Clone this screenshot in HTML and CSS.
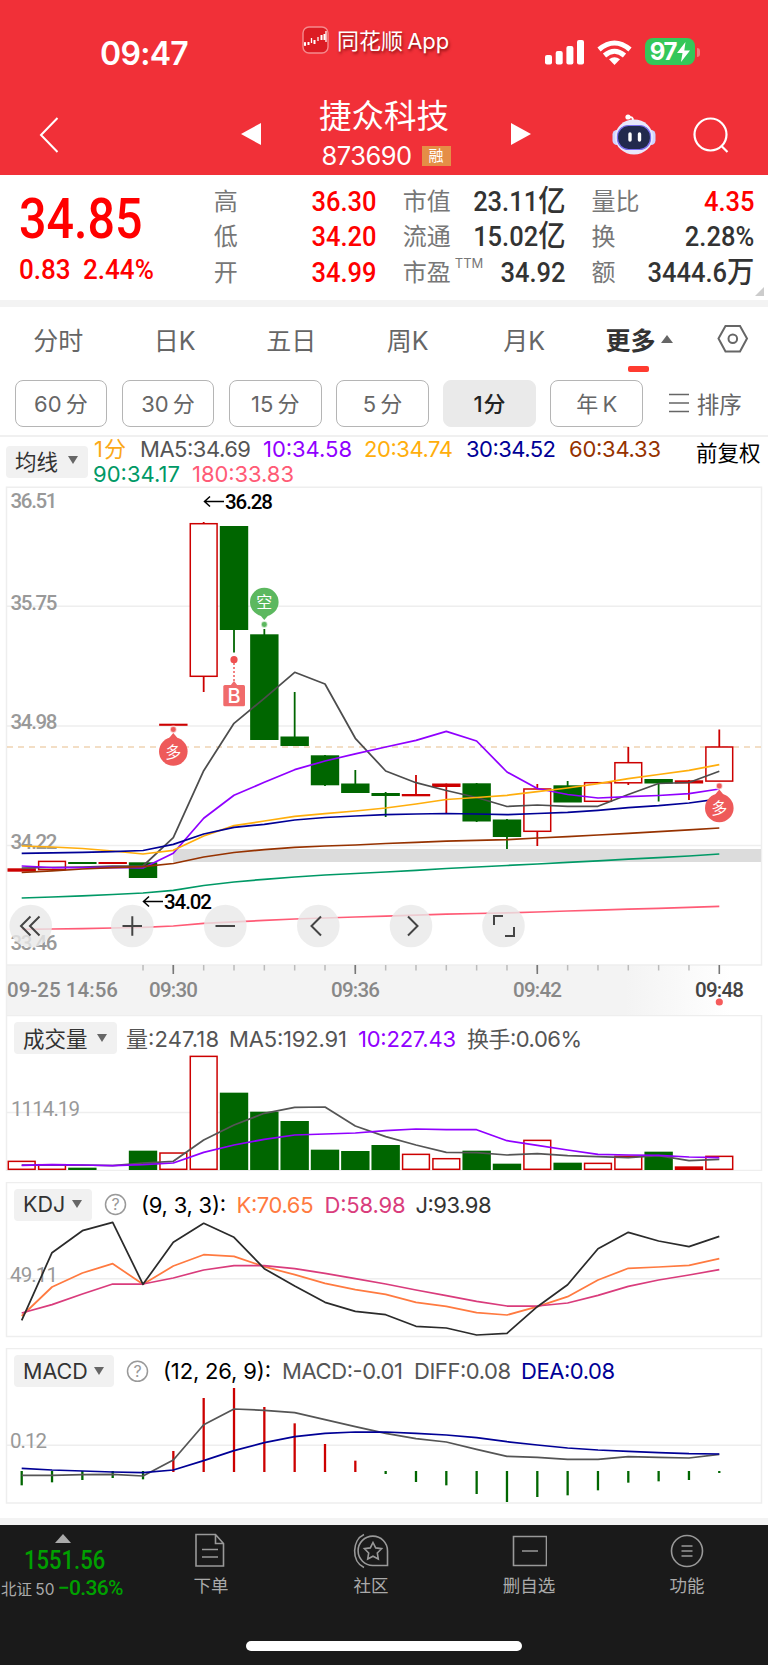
FILE: index.html
```html
<!DOCTYPE html>
<html lang="zh-CN">

<head>
    <meta charset="UTF-8">
    <meta name="viewport" content="width=device-width, initial-scale=1.0">
    <title>捷众科技 873690</title>
    <link rel="stylesheet" href="styles.css">
</head>

<body>
    <header>
        <div class="status-bar">
            <div class="clock">09:47</div>
            <div class="app-name">
                <svg width="27" height="28" viewBox="0 0 27 28">
                    <rect x="1" y="1" width="25" height="26" rx="6" fill="#dc1c24" stroke="#f58a8d" stroke-width="1.4" />
                    <path d="M3 16v4M9.500 12v5M16 11v4M24 5v11" stroke="#fff" stroke-width="1.300" />
                    <path d="M3 16.500v3M6.500 16v3M12.500 14v4M19.500 9v5M22.500 8v6" stroke="#fff" stroke-width="2" />
                </svg>
                <span>同花顺 App</span>
            </div>
            <div class="status-icons">
                <svg width="39" height="25" viewBox="0 0 39 25" fill="#fff">
                    <rect x="0" y="15" width="7" height="9.500" rx="2" />
                    <rect x="10.700" y="11" width="7" height="13.500" rx="2" />
                    <rect x="21.400" y="6" width="7" height="18.500" rx="2" />
                    <rect x="32" y="0" width="7" height="24.500" rx="2" />
                </svg>
                <svg class="wifi" width="35" height="26" viewBox="0 0 35 26" fill="none" stroke="#fff" stroke-width="5">
                    <path d="M2 9.500Q17.500-3.500 33 9.500" />
                    <path d="M7.500 15.500Q17.500 7 27.500 15.500" />
                    <path d="M17.500 25L12 19.200Q17.500 15.500 23 19.200Z" fill="#fff" stroke="none" />
                </svg>
                <div class="battery">97<svg width="13" height="20" viewBox="0 0 13 20"><path d="M8.500 0L0 11h5.500L4 20l9-11.500H7.300z" fill="#fff" /></svg></div>
                <i class="battery-tip"></i>
            </div>
        </div>
        <div class="nav">
            <svg class="back" width="20" height="36" viewBox="0 0 20 36"><path d="M18.500 1L2 18l16.500 17" fill="none" stroke="#fff" stroke-width="2" /></svg>
            <svg class="prev" width="20" height="22" viewBox="0 0 20 22"><path d="M0 11L20 0v22z" fill="#fff" /></svg>
            <div class="stock">
                <div class="stock-name">捷众科技</div>
                <div class="stock-code">873690 <span class="tag">融</span></div>
            </div>
            <svg class="next" width="20" height="22" viewBox="0 0 20 22"><path d="M20 11L0 0v22z" fill="#fff" /></svg>
            <svg class="robot" width="44" height="41" viewBox="0 0 44 41">
                <path d="M21 7c0-4-1-4-5-4" fill="none" stroke="#fff" stroke-width="2" />
                <circle cx="16" cy="3" r="2.600" fill="#fff" />
                <rect x="0.500" y="16" width="9" height="15" rx="4.500" fill="#cfd4ff" />
                <rect x="34.500" y="16" width="9" height="15" rx="4.500" fill="#cfd4ff" />
                <ellipse cx="22" cy="23" rx="19" ry="17.500" fill="#e9e8fb" />
                <rect x="5.500" y="11.500" width="33" height="24" rx="11" fill="#222a4d" stroke="#7b6ff0" stroke-width="1.200" />
                <path d="M18 20v6M27.500 20v6" stroke="#fff" stroke-width="3.400" stroke-linecap="round" />
            </svg>
            <svg class="search" width="36" height="36" viewBox="0 0 36 36" fill="none" stroke="#fff" stroke-width="2.200">
                <circle cx="17.500" cy="17.500" r="16" />
                <path d="M28.500 29l6 6" />
            </svg>
        </div>
    </header>

    <section class="quote">
        <div class="price-box">
            <div class="price"><span>34.85</span></div>
            <div class="change"><span>0.83</span><span>2.44%</span></div>
        </div>
        <dl>
            <div><dt>高</dt><dd class="red">36.30</dd></div>
            <div><dt>低</dt><dd class="red">34.20</dd></div>
            <div><dt>开</dt><dd class="red">34.99</dd></div>
        </dl>
        <dl>
            <div><dt>市值</dt><dd>23.11<b>亿</b></dd></div>
            <div><dt>流通</dt><dd>15.02<b>亿</b></dd></div>
            <div><dt>市盈<sup>TTM</sup></dt><dd>34.92</dd></div>
        </dl>
        <dl>
            <div><dt>量比</dt><dd class="red">4.35</dd></div>
            <div><dt>换</dt><dd>2.28%</dd></div>
            <div><dt>额</dt><dd>3444.6<b>万</b></dd></div>
        </dl>
        <i class="corner"></i>
    </section>

    <nav class="tabs">
        <span>分时</span>
        <span>日K</span>
        <span>五日</span>
        <span>周K</span>
        <span>月K</span>
        <span class="active">更多<i class="tri-up"></i></span>
        <svg width="32" height="30" viewBox="0 0 32 30" fill="none" stroke="#666" stroke-width="2">
            <path d="M8.500 2h14.500l7 12.500L23 27.500H8.500L1.500 14.500z" />
            <circle cx="15.800" cy="14.700" r="4.300" />
        </svg>
    </nav>
    <div class="periods">
        <button>60 分</button>
        <button>30 分</button>
        <button>15 分</button>
        <button>5 分</button>
        <button class="selected">1 分</button>
        <button>年 K</button>
        <div class="sort"><svg width="20" height="20" viewBox="0 0 20 20" stroke="#666" stroke-width="1.700"><path d="M0 1.500h20M0 10h20M0 18.500h20" /></svg>排序</div>
    </div>

    <div class="ma-bar">
        <div class="picker">均线<i class="tri-down"></i></div>
        <svg class="legend" width="608" height="49" viewBox="88 437 608 49">
            <text x="94" y="457" textLength="32" fill="#fba919">1分</text>
            <text x="140" y="457" textLength="111" fill="#555">MA5:34.69</text>
            <text x="263" y="457" textLength="89" fill="#9000ff">10:34.58</text>
            <text x="364" y="457" textLength="89" fill="#ffae0c">20:34.74</text>
            <text x="466" y="457" textLength="90" fill="#000096">30:34.52</text>
            <text x="569" y="457" textLength="92" fill="#963200">60:34.33</text>
            <text x="93" y="481.500" textLength="87" fill="#009966">90:34.17</text>
            <text x="192" y="481.500" textLength="102" fill="#ff5b76">180:33.83</text>
        </svg>
        <div class="adjust">前复权</div>
    </div>

    <svg id="kline" class="chart" width="768" height="530" viewBox="0 486 768 530">
        <defs>
            <linearGradient id="fade" x1="0" x2="1" y1="0" y2="0">
                <stop offset="0.820" stop-color="#f3f3f3" />
                <stop offset="0.960" stop-color="#fff" />
            </linearGradient>
        </defs>
        <rect x="6" y="965" width="755" height="50" fill="url(#fade)" />
        <path class="grid" d="M6.500 1015V487.200H761.500V965H6.500M6.500 606.200H761M6.500 726H761M6.500 845.500H761" />
        <rect x="173" y="849" width="588" height="13" fill="#dcdcdc" />
        <g class="axis">
            <text x="10.500" y="507.500" textLength="47">36.51</text>
            <text x="10.500" y="609.500" textLength="47">35.75</text>
            <text x="10.500" y="729" textLength="47">34.98</text>
            <text x="10.500" y="848.500" textLength="47">34.22</text>
            <text x="10.500" y="950" textLength="47">33.46</text>
        </g>
        <path d="M7 747H761" stroke="#e8bd8c" stroke-width="1.200" stroke-dasharray="6 5" />
        <g class="candles"></g>
        <g class="lines"></g>

        <g class="mark">
            <path d="M224 501.500H204.500M210 496.500l-5.500 5 5.500 5" />
            <text x="225" y="509" textLength="48">36.28</text>
            <path d="M163 901.500H143.500M149 896.500l-5.500 5 5.500 5" />
            <text x="164" y="909" textLength="48">34.02</text>
        </g>

        <g class="pin" fill="#ee5a5a">
            <circle class="halo" cx="173.300" cy="729.500" r="3.200" />
            <path d="M173.300 733l5 6h-10z" />
            <circle cx="173.300" cy="751.500" r="14.300" />
            <text x="173.300" y="757.500">多</text>
        </g>
        <g class="pin" fill="#ee5a5a">
            <circle class="halo" cx="719.300" cy="786" r="3.200" />
            <path d="M719.300 789.500l5 6h-10z" />
            <circle cx="719.300" cy="808" r="14.300" />
            <text x="719.300" y="814">多</text>
        </g>
        <g class="pin" fill="#5cb85f">
            <circle class="halo" cx="264.300" cy="624.500" r="3.200" />
            <path d="M264.300 620l6-7h-12z" />
            <circle cx="264.300" cy="602" r="14.300" />
            <text x="264.300" y="608">空</text>
        </g>
        <g class="pin" fill="#f06b6b">
            <circle cx="234" cy="659.700" r="3.600" fill="#ee5050" />
            <path d="M234 663v20" stroke="#ee5a5a" stroke-width="1.500" stroke-dasharray="2 2" />
            <path d="M234 681l4 5h-8z" />
            <rect x="223.300" y="685" width="21.700" height="21.300" rx="1.500" />
            <text class="buy" x="234" y="702.500">B</text>
        </g>

        <g class="tools">
            <circle cx="30.700" cy="926" r="21.300" />
            <circle cx="132.300" cy="926" r="21.300" />
            <circle cx="225.300" cy="926" r="21.300" />
            <circle cx="318.300" cy="926" r="21.300" />
            <circle cx="411" cy="926" r="21.300" />
            <circle cx="503.500" cy="926" r="21.300" />
            <path d="M30.500 916.500l-9.500 9.500 9.500 9.500M39.500 916.500l-9.500 9.500 9.500 9.500" />
            <path d="M122.500 926h19.500M132.300 916.300v19.500M215.500 926h19.500" />
            <path d="M321 916.500l-9.500 9.500 9.500 9.500M408 916.500l9.500 9.500-9.500 9.500" />
            <path d="M494 925v-9h9M514 927v9h-9" />
        </g>

        <path id="ticks" stroke="#bbb" stroke-width="1.500" />
        <path d="M173.300 965v9M355.300 965v9M537.300 965v9M719.300 965v9" stroke="#777" stroke-width="1.600" />
        <g class="axis time">
            <text x="7" y="996.500" textLength="111">09-25 14:56</text>
            <text x="149" y="996.500" textLength="49">09:30</text>
            <text x="331" y="996.500" textLength="49">09:36</text>
            <text x="513" y="996.500" textLength="49">09:42</text>
            <text class="now" x="695" y="996.500" textLength="49">09:48</text>
        </g>
        <circle cx="719.300" cy="1002" r="3.600" fill="#f55b5b" />
    </svg>

    <div class="panel volume">
        <svg id="volume" class="chart" width="768" height="156" viewBox="0 5 768 156">
            <path class="grid" d="M6.500 5.500H761.500V160.500H6.500zM6.500 102.500H761" />
            <text class="axis-label" x="11" y="105.700" textLength="69">1114.19</text>
            <g class="candles"></g>
            <g class="lines"></g>
            <g class="legend">
                <text x="126" y="37" textLength="93" fill="#555">量:247.18</text>
                <text x="229" y="37" textLength="118" fill="#555">MA5:192.91</text>
                <text x="358" y="37" textLength="98" fill="#9000ff">10:227.43</text>
                <text x="467" y="37" textLength="115" fill="#555">换手:0.06%</text>
            </g>
        </svg>
        <div class="picker">成交量<i class="tri-down"></i></div>
    </div>

    <div class="panel kdj">
        <svg id="kdj" class="chart" width="768" height="156" viewBox="0 12 768 156">
            <path class="grid" d="M6.500 12.500H761.500V166.500H6.500zM6.500 108.800H761" />
            <text class="axis-label" x="10" y="112" textLength="48">49.11</text>
            <g class="lines"></g>
            <g class="help"><circle cx="115.500" cy="34.500" r="10" /><text x="115.500" y="40.300">?</text></g>
            <g class="legend">
                <text x="141" y="43" textLength="85" fill="#000">(9, 3, 3):</text>
                <text x="236.500" y="43" textLength="77" fill="#ff7a40">K:70.65</text>
                <text x="324.500" y="43" textLength="81" fill="#d93c7c">D:58.98</text>
                <text x="415.500" y="43" textLength="76" fill="#333">J:93.98</text>
            </g>
        </svg>
        <div class="picker">KDJ<i class="tri-down"></i></div>
    </div>

    <div class="panel macd">
        <svg id="macd" class="chart" width="768" height="156" viewBox="0 8 768 156">
            <path class="grid" d="M6.500 8.500H761.500V163H6.500zM6.500 105.300H761" />
            <text class="axis-label" x="10" y="108" textLength="37">0.12</text>
            <g class="candles"></g>
            <g class="lines"></g>
            <g class="help"><circle cx="137.500" cy="31.300" r="10" /><text x="137.500" y="37">?</text></g>
            <g class="legend">
                <text x="163" y="39" textLength="108" fill="#000">(12, 26, 9):</text>
                <text x="282" y="39" textLength="121" fill="#555">MACD:-0.01</text>
                <text x="414" y="39" textLength="97" fill="#555">DIFF:0.08</text>
                <text x="521" y="39" textLength="94" fill="#000096">DEA:0.08</text>
            </g>
        </svg>
        <div class="picker">MACD<i class="tri-down"></i></div>
    </div>

    <footer>
        <div class="toolbar">
            <div class="index">
                <i class="tri-up"></i>
                <div class="index-value"><span>1551.56</span></div>
                <div class="index-row">北证 50 <span>−0.36%</span></div>
            </div>
            <div class="tool">
                <svg width="36" height="36" viewBox="0 0 36 36"><path d="M3 1.500H22.500l8 9v22.500H3zM22.500 1.500v9h8M9 16.500h16M9 24h16" /></svg>
                下单
            </div>
            <div class="tool">
                <svg width="36" height="36" viewBox="0 0 36 36"><path d="M11 1.500C-1 7-2 28 11 34.500M34.500 18v14.500H20A14.700 14.700 0 1 1 34.500 18z" /><path d="M20 9.500l2.700 5.400 5.900.800-4.300 4.300 1 6-5.300-2.800-5.300 2.800 1-6-4.300-4.300 5.900-.800z" /></svg>
                社区
            </div>
            <div class="tool">
                <svg width="36" height="36" viewBox="0 0 36 36"><path d="M2.500 3.500h33v29h-33zM11 18h16" /></svg>
                删自选
            </div>
            <div class="tool">
                <svg width="36" height="36" viewBox="0 0 36 36"><circle cx="18" cy="18" r="15.500" /><path d="M12.500 13h11M12.500 18h11M12.500 23h11" /></svg>
                功能
            </div>
        </div>
        <div class="home-bar"></div>
    </footer>

    <script>
        const FIRST_X = 21.7;
        const STEP = 30.33;
        const RED = '#cc0000';
        const GREEN = '#006600';

        function xAt(i) {
            return FIRST_X + i * STEP;
        }

        function addLine(chart, color, values, divisor) {
            const points = values.map((v, i) => xAt(i).toFixed(1) + ',' + (v / divisor).toFixed(1));
            document.querySelector('#' + chart + ' .lines').innerHTML +=
                `<polyline points="${points.join(' ')}" stroke="${color}" />`;
        }

        // r = hollow up, R = thin solid up, g = down
        function box(type, i, top, bottom) {
            const x = xAt(i) - 14.2;
            if (type === 'r') {
                return `<rect x="${x + 0.8}" y="${top + 0.7}" width="26.8" height="${bottom - top - 1.4}" fill="#fff" stroke="${RED}" stroke-width="1.5" />`;
            }
            return `<rect x="${x}" y="${top}" width="28.4" height="${bottom - top}" fill="${type === 'g' ? GREEN : RED}" />`;
        }

        // type, body top, body bottom, wick top, wick bottom
        const candles = [
            ['R', 868.3, 871.7], ['r', 860.7, 870.3], ['g', 862, 864], ['R', 862, 864],
            ['g', 862.3, 878], ['R', 723.7, 725.8], ['r', 523, 677, 522, 692], ['g', 526, 630, 526, 652.5],
            ['g', 634.3, 740, 629, 740], ['g', 736.5, 746, 692, 746], ['g', 755.3, 785.3, 755, 786], ['g', 783.5, 793, 770, 793],
            ['g', 793, 796, 792, 817], ['R', 794, 796.3, 775, 796], ['R', 783.5, 787, 783.5, 814], ['g', 783.3, 821.5, 783, 822],
            ['g', 819.5, 837, 819, 849], ['r', 788.3, 832, 784, 846], ['g', 785.3, 802.5, 781, 802], ['r', 782, 802],
            ['r', 762, 783.5, 747, 785], ['g', 779, 783.5, 779, 801.5], ['R', 780.3, 783.5, 780, 800], ['r', 746.3, 781.8, 729.5, 781]
        ];
        let html = '';
        candles.forEach(([type, top, bottom, high, low], i) => {
            if (high) {
                html += `<path d="M${xAt(i)} ${high}V${low}" stroke="${type === 'g' ? GREEN : RED}" stroke-width="1.8" />`;
            }
            html += box(type, i, top, bottom);
        });
        document.querySelector('#kline .candles').innerHTML = html;

        addLine('kline', '#4d4d4d', [868, 867.5, 867, 866, 866, 837.7, 770.7, 723.3, 698.3, 672.3, 684, 738.3, 771, 782.7, 790.5, 797.5, 806.5, 805, 806.3, 806.3, 794.5, 783.5, 782.5, 771.3], 1);
        addLine('kline', '#9000ff', [866, 867.5, 867.7, 867.3, 868, 853.3, 818.3, 795.3, 782.3, 769.7, 761, 753.8, 747, 740.3, 731.3, 741, 772, 788.5, 794.5, 798, 796.7, 795.5, 793.7, 789], 1);
        addLine('kline', '#ffae0c', [846, 847, 848.5, 851, 854, 850.3, 836, 825.7, 821, 816.3, 813.7, 811, 808, 804, 799.5, 797.5, 795.3, 791.7, 788, 783.7, 778.7, 774.5, 770.3, 764.7], 1);
        addLine('kline', '#000096', [853.3, 852.9, 852.3, 851.6, 850.5, 844.3, 834, 827.3, 824.3, 820, 817.5, 816, 814.7, 814, 813.5, 814, 814.7, 813.5, 812.3, 810.3, 807.7, 805.7, 803, 798.8], 1);
        addLine('kline', '#963200', [872.5, 870.8, 869, 867.6, 866.7, 863.5, 857, 852.5, 849.7, 847.3, 846, 845, 843.5, 842.3, 841.1, 840.4, 839.7, 838, 836.6, 835, 833.3, 831.6, 829.8, 828], 1);
        addLine('kline', '#009966', [898, 897, 895.8, 894.5, 893, 890.3, 885.5, 882, 879.3, 877, 875, 873.5, 872, 870.3, 868.5, 867, 865.5, 864, 862.4, 860.9, 859.2, 857.6, 856, 854], 1);
        addLine('kline', '#ff5b76', [929.3, 929, 928.6, 928, 927.3, 926, 923.3, 921.8, 920.4, 919, 918, 917, 916.2, 915.2, 914.2, 913.5, 912.8, 912, 911, 910.2, 909.2, 908.4, 907.4, 906.3], 1);

        let ticks = '';
        for (let i = 4; i < 23; i++) {
            ticks += `M${xAt(i)} 965v5.5`;
        }
        document.getElementById('ticks').setAttribute('d', ticks);

        // the lower panels keep their samples at three units per pixel
        const volumes = [['r', 452], ['r', 462], ['g', 473], null, ['g', 422], ['r', 427], ['r', 137], ['g', 248],
            ['g', 305], ['g', 333], ['g', 419], ['g', 423], ['g', 405], ['r', 431], ['r', 444], ['g', 422],
            ['g', 461], ['r', 389], ['g', 458], ['r', 458], ['r', 437], ['g', 425], ['R', 469], ['r', 437]];
        document.querySelector('#volume .candles').innerHTML =
            volumes.map((v, i) => v ? box(v[0], i, v[1] / 3, 160) : '').join('');
        addLine('volume', '#555', [465, 465, 465, 467, 459, 454, 390, 345, 310, 292, 291, 348, 380, 405, 427, 428, 435, 431, 437, 440, 443, 437, 452, 448], 3);
        addLine('volume', '#9000ff', [466, 464, 465, 467, 464, 459, 427, 405, 388, 375, 372, 369, 362, 357, 359, 359, 392, 406, 420, 433, 435, 436, 441, 443], 3);

        addLine('kdj', '#ff7a40', [438, 351, 309, 281, 343, 288, 254, 259, 290, 314, 340, 359, 373, 397, 409, 428, 435, 410, 380, 330, 295, 291, 286, 266], 3);
        addLine('kdj', '#d93c7c', [429, 404, 372, 342, 342, 324, 300, 287, 287, 296, 310, 326, 342, 360, 377, 394, 408, 408, 399, 376, 349, 330, 315, 299], 3);
        addLine('kdj', '#2b2b2b', [451, 248, 182, 157, 343, 217, 160, 202, 296, 348, 397, 424, 434, 469, 474, 495, 490, 410, 344, 236, 187, 213, 230, 199], 3);

        const bars = [436, 427, 420, 414, 418, 333, 174, 144, 201, 250, 312, 362, 402, 426, 436, 462, 486, 471, 466, 451, 428, 424, 420, 399];
        document.querySelector('#macd .candles').innerHTML = bars.map((v, i) =>
            `<path d="M${xAt(i)} ${v < 394 ? 132 : 131}V${v / 3}" stroke="${v < 394 ? RED : GREEN}" stroke-width="2.3" />`).join('');
        addLine('macd', '#555', [406, 406, 404, 403, 408, 360, 254, 207, 211, 218, 239, 260, 280, 296, 306, 328, 349, 352, 358, 358, 350, 352, 354, 343], 3);
        addLine('macd', '#000096', [385, 390, 393, 396, 398, 390, 362, 332, 308, 290, 280, 276, 276, 280, 285, 293, 305, 315, 324, 330, 334, 338, 341, 342], 3);
    </script>
</body>

</html>
```
FILE: styles.css
```css
* {
    box-sizing: border-box;
}

body {
    margin: 0;
    width: 768px;
    font-family: Inter, "Noto Sans CJK SC", sans-serif;
    background-color: #fff;
    color: #333;
}

svg {
    display: block;
    flex: none;
}

/* Header */
header {
    height: 174.5px;
    background-color: #f13038;
    color: #fff;
}

.status-bar {
    display: flex;
    height: 90px;
    padding-left: 100px;
}

.clock {
    width: 202px;
    padding-top: 34px;
    font-size: 32px;
    font-weight: 600;
    line-height: 39px;
    letter-spacing: -0.7px;
}

.app-name {
    display: flex;
    width: 243px;
    gap: 8px;
    padding-top: 26px;
    font-size: 22px;
    line-height: 30px;
    white-space: nowrap;
    word-spacing: -2px;
    text-shadow: 1px 2px 3px rgba(90, 0, 0, 0.7);
}

.status-icons {
    display: flex;
    padding-top: 40px;
}

.wifi {
    margin: 0 13px;
}

.battery {
    display: flex;
    align-items: center;
    justify-content: center;
    gap: 1px;
    width: 50px;
    height: 27px;
    margin-top: -2px;
    border-radius: 8px;
    background-color: #34c759;
    font-size: 24px;
    font-weight: 700;
    letter-spacing: -1.2px;
}

.battery-tip {
    width: 3px;
    height: 9px;
    margin: 8px 0 0 2px;
    border-radius: 0 4px 4px 0;
    background-color: #f4777c;
}

.nav {
    display: flex;
    align-items: flex-start;
    padding-left: 39px;
}

.back {
    margin: 27px 182px 0 0;
}

.prev,
.next {
    margin-top: 33px;
}

.stock {
    width: 250px;
    padding-top: 7px;
    text-align: center;
}

.stock-name {
    margin-left: -4px;
    font-size: 32.500px;
    line-height: 40px;
}

.stock-code {
    display: flex;
    align-items: center;
    justify-content: center;
    gap: 10px;
    margin-top: 5px;
    font-size: 25.500px;
    line-height: 27px;
    letter-spacing: -0.5px;
}

.tag {
    width: 29px;
    height: 20px;
    background-color: #e58e46;
    font-size: 15px;
    line-height: 20px;
    letter-spacing: 0;
}

.robot {
    margin: 24px 37px 0 81px;
}

.search {
    margin-top: 27px;
}

/* Quote */
.quote {
    position: relative;
    display: flex;
    height: 132px;
    padding: 9px 13.500px 0 19px;
    border-bottom: 7px solid #f3f3f3;
}

.price-box {
    width: 195px;
    color: #f00;
    font-family: Roboto, sans-serif;
    font-weight: 500;
}

.price {
    height: 64px;
    font-size: 55px;
    line-height: 70px;
}

.price span,
.change span {
    display: inline-block;
    transform: scaleX(0.88);
    transform-origin: left;
}

.change {
    display: flex;
    font-size: 28px;
    line-height: 44px;
}

.change span {
    transform: scaleX(0.93);
}

.change span:first-child {
    width: 64px;
}

.quote dl {
    width: 163px;
    margin: 0 26px 0 0;
}

.quote dl:last-of-type {
    margin-right: 0;
}

.quote dl div {
    display: flex;
    justify-content: space-between;
    height: 35.700px;
    line-height: 36px;
}

.quote dt {
    color: #777;
    font-size: 24px;
    white-space: nowrap;
}

.quote sup {
    display: inline-block;
    margin-left: 4px;
    font-size: 13px;
    line-height: 1;
    vertical-align: 13px;
}

.quote dd {
    margin: 0;
    font-family: Roboto, "Noto Sans CJK SC", sans-serif;
    font-size: 28px;
    font-weight: 500;
    white-space: nowrap;
    transform: scaleX(0.91);
    transform-origin: right;
}

.quote dd b {
    font-size: 30px;
    font-weight: 500;
    line-height: 1;
}

.quote .red {
    color: #f00;
}

.corner {
    position: absolute;
    right: 4px;
    bottom: 4px;
    border-left: 9px solid transparent;
    border-bottom: 9px solid #ccc;
}

/* Tabs */
.tabs {
    display: flex;
    align-items: center;
    height: 73.500px;
    padding-bottom: 9px;
    color: #666;
    font-size: 25px;
}

.tabs span {
    width: 116.500px;
    text-align: center;
}

.tabs .active {
    position: relative;
    display: flex;
    align-items: center;
    width: 134px;
    padding-left: 23px;
    color: #333;
    font-weight: 700;
}

.tabs .active::after {
    content: "";
    position: absolute;
    left: 45px;
    top: 45px;
    width: 21px;
    height: 6px;
    border-radius: 2px;
    background-color: #ff3b30;
}

.tri-up {
    margin-left: 5px;
    border: 6px solid transparent;
    border-top: 0;
    border-bottom: 8px solid #666;
}

.tri-down {
    border: 5.500px solid transparent;
    border-bottom: 0;
    border-top: 8px solid #666;
}

.periods {
    display: flex;
    gap: 14.500px;
    height: 57px;
    padding-left: 14.500px;
    border-bottom: 2px solid #f0f0f0;
}

.periods button {
    width: 92.700px;
    height: 47px;
    padding: 0 0 4px;
    border: 1.500px solid #b5b5b5;
    border-radius: 8px;
    background-color: #fff;
    color: #666;
    font: 22px Inter, "Noto Sans CJK SC", sans-serif;
    word-spacing: -2px;
}

.periods .selected {
    border-color: #eaeaea;
    background-color: #eaeaea;
    color: #222;
    font-weight: 500;
    word-spacing: -5px;
}

.sort {
    display: flex;
    align-items: center;
    gap: 8px;
    height: 47px;
    margin-left: 11px;
    padding-bottom: 2px;
    color: #666;
    font-size: 22.500px;
}

/* Chart legends */
.ma-bar {
    display: flex;
    height: 49px;
    padding-left: 6px;
}

.picker {
    display: flex;
    align-items: center;
    justify-content: space-between;
    width: 82px;
    height: 32px;
    padding: 0 10px 1px 9px;
    border-radius: 4px;
    background-color: #f1f1f1;
    font-size: 21.500px;
    white-space: nowrap;
}

.ma-bar .picker {
    margin-top: 9px;
    padding-bottom: 4px;
}

.adjust {
    flex: none;
    padding-top: 1px;
    color: #000;
    font-size: 21.500px;
    line-height: 31px;
}

.legend text {
    font-size: 22px;
}

/* Charts */
.chart text {
    font-family: Inter, "Noto Sans CJK SC", sans-serif;
}

.grid {
    fill: none;
    stroke: #eee;
    stroke-width: 1.500;
}

.lines {
    fill: none;
    stroke-width: 1.750;
    stroke-linejoin: round;
}

.chart .axis text,
.chart .axis-label {
    fill: #999;
    font-family: Roboto, sans-serif;
    font-size: 20.500px;
    font-weight: 500;
}

.chart .axis-label {
    font-weight: 400;
}

.chart .time text {
    fill: #888;
}

.chart .time .now {
    fill: #444;
}

.mark path {
    fill: none;
    stroke: #000;
    stroke-width: 1.500;
}

.chart .mark text {
    font-family: Roboto, sans-serif;
    font-size: 20.500px;
    font-weight: 500;
}

.chart .pin text {
    fill: #fff;
    font-size: 16px;
    text-anchor: middle;
}

.chart .pin .buy {
    font-size: 20px;
    font-weight: 500;
}

.halo {
    stroke: #fff;
    stroke-opacity: 0.6;
    stroke-width: 1.500;
}

.tools circle {
    fill: #e9e9e9;
    fill-opacity: 0.8;
}

.tools path {
    fill: none;
    stroke: #444;
    stroke-width: 2;
}

.help circle {
    fill: none;
    stroke: #999;
    stroke-width: 1.500;
}

.help text {
    fill: #999;
    font-size: 16px;
    text-anchor: middle;
}

.panel {
    display: grid;
    height: 166.500px;
}

.volume {
    margin-top: -1px;
}

.panel > * {
    grid-area: 1 / 1;
}

.panel .picker {
    width: 103px;
    margin: 7px 0 0 14px;
}

.kdj .picker {
    width: 78px;
}

.macd .picker {
    width: 100px;
}

.macd {
    height: 177px;
    border-bottom: 7px solid #f3f3f3;
}

/* Footer */
footer {
    height: 140px;
    background-color: #1a1a1a;
    color: #aaa;
}

.toolbar {
    display: flex;
    height: 116px;
}

.index {
    width: 130px;
    padding-top: 9px;
}

.index .tri-up {
    display: block;
    width: 0;
    margin-left: 55px;
    border-width: 0 8px 9px;
    border-bottom-color: #aaa;
}

.index-value,
.index-row span {
    color: #00a000;
    font-family: Roboto, sans-serif;
}

.index-value {
    padding-left: 24px;
    font-size: 25px;
    font-weight: 500;
    line-height: 36px;
}

.index-value span {
    display: inline-block;
    transform: scaleX(0.88);
    transform-origin: left;
}

.index-row {
    padding-left: 1px;
    font-size: 15.500px;
    line-height: 18px;
    white-space: nowrap;
    word-spacing: -1px;
}

.index-row span {
    font-size: 21px;
    font-weight: 500;
    letter-spacing: -0.7px;
}

.tool {
    display: flex;
    flex-direction: column;
    align-items: center;
    width: 158px;
    padding-top: 8px;
    font-size: 17.500px;
    line-height: 33px;
}

.tool:nth-child(2) {
    width: 162px;
}

.tool svg {
    fill: none;
    stroke: #999;
    stroke-width: 1.600;
}

.home-bar {
    width: 276px;
    height: 10px;
    margin: 0 auto;
    border-radius: 5px;
    background-color: #fff;
}
```
